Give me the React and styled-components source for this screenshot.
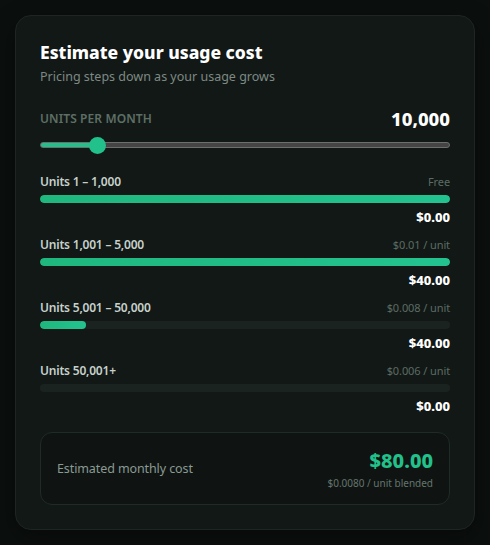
import React, { useState } from 'react';
import styled, { createGlobalStyle } from 'styled-components';

const GREEN = '#22c08a';

const GlobalStyle = createGlobalStyle`
  html, body {
    margin: 0;
    padding: 0;
    background: #0b0f0e;
  }
  body {
    font-family: 'Noto Sans', 'Open Sans', sans-serif;
    color: #e8efeb;
  }
`;

const tiers = [
  { from: 1, to: 1000, rate: 0, label: 'Units 1 – 1,000', rateText: 'Free' },
  { from: 1001, to: 5000, rate: 0.01, label: 'Units 1,001 – 5,000', rateText: '$0.01 / unit' },
  { from: 5001, to: 50000, rate: 0.008, label: 'Units 5,001 – 50,000', rateText: '$0.008 / unit' },
  { from: 50001, to: null, rate: 0.006, label: 'Units 50,001+', rateText: '$0.006 / unit' },
];

const Page = styled.div`
  padding: 15px;
  box-sizing: border-box;
  width: 490px;
`;

const Card = styled.section`
  width: 460px;
  box-sizing: border-box;
  background: #121816;
  border: 1px solid #1d2622;
  border-radius: 16px;
  padding: 24px;
  box-shadow: 0 8px 24px rgba(0, 0, 0, 0.35);
`;

const Title = styled.h2`
  margin: 0;
  font-size: 17.5px;
  line-height: 24px;
  font-weight: 800;
  color: #ffffff;
`;

const Subtitle = styled.p`
  margin: 4px 0 0;
  font-size: 12.5px;
  line-height: 18px;
  color: #7d8a84;
`;

const ControlHead = styled.div`
  display: flex;
  justify-content: space-between;
  align-items: center;
  margin-top: 20px;
`;

const ControlLabel = styled.span`
  font-size: 12px;
  font-weight: 600;
  letter-spacing: 0.1px;
  text-transform: uppercase;
  color: #5d6f65;
`;

const ControlValue = styled.span`
  font-size: 18.5px;
  font-weight: 800;
  color: #ffffff;
`;

const Range = styled.input`
  -webkit-appearance: none;
  appearance: none;
  display: block;
  width: 100%;
  height: 16px;
  margin: 6px 0 0;
  background: transparent;

  &::-webkit-slider-runnable-track {
    height: 6px;
    border-radius: 3px;
    box-sizing: border-box;
    border: 1px solid #6e6e6e;
    background: linear-gradient(
      to right,
      ${GREEN} 0,
      ${GREEN} ${(p) => p.$pct}%,
      #454545 ${(p) => p.$pct}%,
      #454545 100%
    );
  }
  &::-webkit-slider-thumb {
    -webkit-appearance: none;
    width: 17px;
    height: 17px;
    border-radius: 50%;
    background: ${GREEN};
    border: none;
    margin-top: -6.5px;
  }
`;

const Tiers = styled.div`
  display: flex;
  flex-direction: column;
  gap: 11px;
  margin-top: 21px;
`;

const Tier = styled.div`
  display: flex;
  flex-direction: column;
`;

const TierHead = styled.div`
  display: flex;
  justify-content: space-between;
  align-items: baseline;
  line-height: 16px;
`;

const TierName = styled.span`
  font-size: 12px;
  font-weight: 600;
  letter-spacing: -0.2px;
  color: #c6d0cb;
`;

const TierRate = styled.span`
  font-size: 11px;
  letter-spacing: -0.1px;
  color: #5b6c63;
`;

const Bar = styled.div`
  height: 8px;
  border-radius: 4px;
  background: #1b2320;
  margin-top: 5px;
  overflow: hidden;
`;

const Fill = styled.div`
  height: 100%;
  border-radius: 4px;
  background: linear-gradient(to right, #1fb77e, #23c38f);
`;

const Amount = styled.div`
  text-align: right;
  font-size: 13px;
  font-weight: 800;
  line-height: 17px;
  color: #ffffff;
  margin-top: 6px;
`;

const Summary = styled.div`
  display: flex;
  justify-content: space-between;
  align-items: center;
  margin-top: 17px;
  height: 73px;
  box-sizing: border-box;
  padding: 0 16px;
  border: 1px solid #1f2b26;
  border-radius: 12px;
  background: #0f1412;
`;

const SummaryLabel = styled.span`
  font-size: 12.5px;
  letter-spacing: -0.1px;
  color: #8a9a93;
`;

const SummaryRight = styled.div`
  display: flex;
  flex-direction: column;
  align-items: flex-end;
`;

const Total = styled.span`
  font-size: 20px;
  font-weight: 800;
  line-height: 26px;
  color: ${GREEN};
`;

const Blended = styled.span`
  font-size: 10px;
  line-height: 14px;
  color: #65756e;
  margin-top: 2px;
`;

const fmtMoney = (n) => '$' + n.toFixed(2);

export default function App() {
  const [units, setUnits] = useState(10000);
  const min = 0;
  const max = 82000;
  const pct = ((units - min) / (max - min)) * 100;

  const rows = tiers.map((t) => {
    const cap = t.to === null ? Infinity : t.to;
    const used = Math.max(0, Math.min(units, cap) - t.from + 1);
    const size = t.to === null ? 1 : t.to - t.from + 1;
    const share = t.to === null ? 0 : Math.min(1, used / size);
    return { ...t, used, share, cost: used * t.rate };
  });
  const total = rows.reduce((s, r) => s + r.cost, 0);

  return (
    <Page>
      <GlobalStyle />
      <Card>
        <Title>Estimate your usage cost</Title>
        <Subtitle>Pricing steps down as your usage grows</Subtitle>

        <ControlHead>
          <ControlLabel>Units per month</ControlLabel>
          <ControlValue>{units.toLocaleString('en-US')}</ControlValue>
        </ControlHead>
        <Range
          type="range"
          min={min}
          max={max}
          step={500}
          value={units}
          $pct={pct}
          onChange={(e) => setUnits(Number(e.target.value))}
        />

        <Tiers>
          {rows.map((r) => (
            <Tier key={r.label}>
              <TierHead>
                <TierName>{r.label}</TierName>
                <TierRate>{r.rateText}</TierRate>
              </TierHead>
              <Bar>
                <Fill style={{ width: `${r.share * 100}%` }} />
              </Bar>
              <Amount>{fmtMoney(r.cost)}</Amount>
            </Tier>
          ))}
        </Tiers>

        <Summary>
          <SummaryLabel>Estimated monthly cost</SummaryLabel>
          <SummaryRight>
            <Total>{fmtMoney(total)}</Total>
            <Blended>${(total / units).toFixed(4)} / unit blended</Blended>
          </SummaryRight>
        </Summary>
      </Card>
    </Page>
  );
}
